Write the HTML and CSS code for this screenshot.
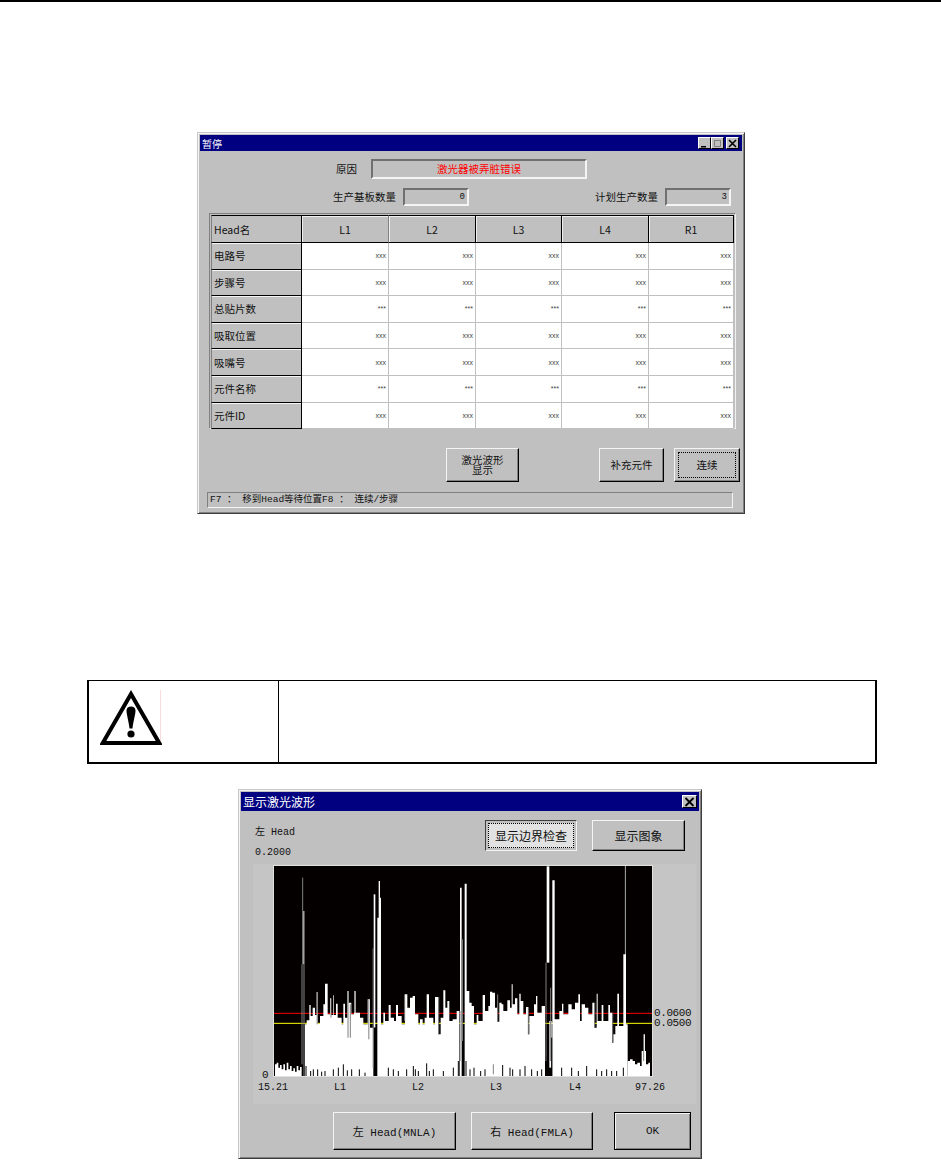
FILE: index.html
```html
<!DOCTYPE html>
<html lang="zh">
<head>
<meta charset="utf-8">
<title>暂停</title>
<link rel="stylesheet" href="styles.css">
</head>
<body>
<div class="rule"></div>

<section class="dlg pause">
  <header class="titlebar small">
    <span>暂停</span>
    <div class="tbtns">
      <span class="tb"><svg viewBox="0 0 11 9" width="11" height="9"><path d="M2 7h5v1.5H2z" fill="#000"/></svg></span>
      <span class="tb"><svg viewBox="0 0 11 9" width="11" height="9"><path d="M2.5 1.5h6v6h-6z" fill="none" stroke="#808080"/><path d="M2 1h7v1H2z" fill="#808080"/></svg></span>
      <span class="tb tb-close"><svg viewBox="0 0 11 9" width="11" height="9"><path d="M2 1l7 7M9 1L2 8" stroke="#000" stroke-width="1.6" fill="none"/></svg></span>
    </div>
  </header>

  <div class="reason-row">
    <span class="lbl">原因</span>
    <div class="field reason">激光器被弄脏错误</div>
  </div>

  <div class="count-row">
    <span class="lbl">生产基板数量</span>
    <div class="field num white-ish">0</div>
    <span class="lbl plan">计划生产数量</span>
    <div class="field num">3</div>
  </div>

  <div class="grid-frame">
    <div class="grid">
      <div class="rowhead first">Head名</div>
      <div class="colhead soft">L1</div>
      <div class="colhead">L2</div>
      <div class="colhead">L3</div>
      <div class="colhead">L4</div>
      <div class="colhead">R1</div>

      <div class="rowhead">电路号</div><div class="cell">xxx</div><div class="cell">xxx</div><div class="cell">xxx</div><div class="cell">xxx</div><div class="cell">xxx</div>
      <div class="rowhead">步骤号</div><div class="cell">xxx</div><div class="cell">xxx</div><div class="cell">xxx</div><div class="cell">xxx</div><div class="cell">xxx</div>
      <div class="rowhead">总贴片数</div><div class="cell">***</div><div class="cell">***</div><div class="cell">***</div><div class="cell">***</div><div class="cell">***</div>
      <div class="rowhead">吸取位置</div><div class="cell">xxx</div><div class="cell">xxx</div><div class="cell">xxx</div><div class="cell">xxx</div><div class="cell">xxx</div>
      <div class="rowhead">吸嘴号</div><div class="cell">xxx</div><div class="cell">xxx</div><div class="cell">xxx</div><div class="cell">xxx</div><div class="cell">xxx</div>
      <div class="rowhead">元件名称</div><div class="cell">***</div><div class="cell">***</div><div class="cell">***</div><div class="cell">***</div><div class="cell">***</div>
      <div class="rowhead">元件ID</div><div class="cell">xxx</div><div class="cell">xxx</div><div class="cell">xxx</div><div class="cell">xxx</div><div class="cell">xxx</div>
    </div>
  </div>

  <div class="pause-actions">
    <button class="btn wave-btn">激光波形<br>显示</button>
    <button class="btn add-btn">补充元件</button>
    <button class="btn cont-btn"><span class="focus">连续</span></button>
  </div>

  <div class="status">F7 ： 移到Head等待位置F8 ： 连续/步骤</div>
</section>

<section class="warn">
  <div class="warn-icon">
    <svg viewBox="0 0 62 56" width="62" height="56">
      <path d="M60.5 0v55" stroke="#fbdcdc" fill="none"/>
      <path d="M31 4L2.8 53h56.4z" fill="#fff" stroke="#000" stroke-width="4" stroke-linejoin="miter"/>
      <path d="M26.5 20.5c0-2.500 2-4 4.500-4s4.500 1.500 4.500 4c0 4-2.500 12-3 18h-3c-.5-6-3-14-3-18z" fill="#000"/>
      <circle cx="31" cy="44" r="3.600" fill="#000"/>
    </svg>
  </div>
  <div class="warn-body"></div>
</section>

<section class="dlg wave">
  <header class="titlebar large">
    <span>显示激光波形</span>
    <span class="tb tb-big"><svg viewBox="0 0 13 10" width="13" height="10"><path d="M2.500 1l8 8M10.500 1l-8 8" stroke="#000" stroke-width="1.800" fill="none"/></svg></span>
  </header>

  <div class="wave-top">
    <div class="wave-info">
      <div>左 Head</div>
      <div>0.2000</div>
    </div>
    <button class="btn check-btn"><span class="focus dither">显示边界检查</span></button>
    <button class="btn image-btn">显示图象</button>
  </div>

  <div class="chart">
    <div class="y-zero">0</div>
    <svg class="plot" viewBox="12 15 1134 630" width="378" height="210">
      <rect x="12" y="15" width="1134" height="630" fill="#040000"/>
      <path d="M12 457H1146" stroke="#ff0000" stroke-width="3" fill="none"/>
      <path d="M12 487H1146" stroke="#ffff00" stroke-width="3" fill="none"/>
      <g fill="#fff">
        <path d="M15 645V610H20V605H25V620H30V612H35V625H40V610H45V628H50V605H55V625H60V615H65V630H70V622H75V632H80V615H85V628H90V618H95V645Z"/>
        <path d="M100 310V150H103V310Z"/>
        <path d="M105 645V490H110V478H118V432H122V465H128V440H135V462H140V393H143V488H150V465H160V430H165V368H173V460H180V412H183V462H190V403H192V462H198V428H203V470H215V490H220V428H225V470H232V390H236V425H244V460H252V390H257V455H270V470H280V490H293V415H300V500H310V645Z"/>
        <path d="M311 500V100H316V500Z"/>
        <path d="M322 500V170H326V60H330V110H333V645H322Z"/>
        <path d="M333 645V490H340V455H345V480H356V432H362V470H372V480H378V432H384V465H395V490H405V400H412V440H420V410H428V405H435V460H445V490H450V475H458V490H464V470H470V400H477V470H490V490H495V408H505V520H512V470H520V388H526V440H532V420H538V480H548V475H560V450H568V645Z"/>
        <path d="M570 645V80H575V645Z"/>
      </g>
      <g fill="#fff" transform="translate(570 0)">
        <path d="M14 645V68H20V390H28V425H35V435H42V490H50V462H55V480H68V402H75V450H85V435H90V392H97V395H105V440H112V482H118V425H125V430H130V450H142V418H150V440H155V370H158V430H165V412H172V460H178V398H182V420H190V460H198V438H204V520H208V465H222V430H228V405H232V455H245V435H255V645Z"/>
        <path d="M260 305V16H268V305Z"/>
        <path d="M268 620V480H275V620Z"/>
        <path d="M277 645V58H284V475H298V450H306V428H310V460H325V430H335V445H345V425H355V400H360V480H365V430H375V440H385V460H397V425H403V500H410V398H413V480H425V432H430V480H445V432H450V455H456V545H460V520H466V495H472V398H477V495H490V280H495V16H498V490H503V645Z"/>
        <path d="M503 645V600H510V595H518V600H525V610H532V605H540V615H545V570H552V520H555V570H558V610H565V605H570V645Z"/>
      </g>
      <path fill="none" stroke="#808080" stroke-width="3" d="M98 50V310M141.500 393V490M183 412V470M234 390V530M241 430V530M254 390V455M296.500 415V535M309.500 262V620M102 310V645M96 310V610M404 400V480M506 408V520M577 235V540M570 450V600"/>
      <path fill="none" stroke="#808080" stroke-width="3" transform="translate(570 0)" d="M6 235V540M113 400V482M205 438V520M258 305V600M272 380V600M496 16V280M551 520V600M100 610V640M404 425V500M458 455V545"/>
      <path fill="none" stroke="#000" stroke-width="3" d="M108 645V615M122 645V630M130 645V625M143 645V625M155 645V632M165 645V630M190 645V625M205 645V620M220 645V610M232 645V628M245 645V625M268 645V625M285 645V635M355 645V620M370 645V625M385 645V630M410 645V625M430 645V615M436 645V625M445 645V630M470 645V607M478 645V630M490 645V625M520 645V630M550 645V620M565 645V600M580 645V540"/>
      <path fill="none" stroke="#000" stroke-width="8" d="M316 645V500"/>
      <path fill="none" stroke="#000" stroke-width="3" transform="translate(570 0)" d="M8 645V600M18 645V600M30 645V625M42 645V620M62 645V630M75 645V625M128 645V612M150 645V620M158 645V625M180 645V625M195 645V615M215 645V625M232 645V630M245 645V625M262 645V585M275 645V530M305 645V620M335 645V620M355 645V630M380 645V615M410 645V625M425 645V630M440 645V625M455 645V630M470 645V630M490 645V620"/>
    </svg>
    <div class="y-marks">
      <div>0.0600</div>
      <div>0.0500</div>
    </div>
    <div class="x-axis">
      <span>15.21</span><span>L1</span><span>L2</span><span>L3</span><span>L4</span><span>97.26</span>
    </div>
  </div>

  <div class="wave-actions">
    <button class="btn left-btn">左 Head(MNLA)</button>
    <button class="btn right-btn">右 Head(FMLA)</button>
    <button class="btn ok-btn">OK</button>
  </div>
</section>
</body>
</html>
```
FILE: styles.css
```css
html, body {
  margin: 0;
  padding: 0;
  background: #fff;
  overflow: hidden;
}

body {
  width: 941px;
  height: 1160px;
  font-family: "Liberation Mono", "Noto Sans CJK SC", monospace;
  color: #111;
}

.rule {
  height: 2px;
  background: #000;
}

/* Dialog shell */
.dlg {
  box-sizing: border-box;
  background: #c0c0c0;
  border: 1px solid;
  border-color: #c8c8c8 #3c3c3c #3c3c3c #c8c8c8;
  box-shadow: inset 1px 1px 0 #f4f4f4, inset -1px -1px 0 #808080;
  padding: 2px;
}

.titlebar {
  display: flex;
  align-items: center;
  justify-content: space-between;
  background: #000080;
  color: #fff;
  font-family: "Noto Sans CJK SC", sans-serif;
}

.titlebar.small {
  height: 16px;
  font-size: 10px;
  padding: 0 3px 0 2px;
}

.titlebar.large {
  height: 19px;
  font-size: 12px;
  padding: 0 2px 0 2px;
}

.tbtns {
  display: flex;
}

.tb {
  box-sizing: border-box;
  display: flex;
  align-items: center;
  justify-content: center;
  width: 13px;
  height: 12px;
  background: #c0c0c0;
  border: 1px solid;
  border-color: #fff #000 #000 #fff;
}

.tb svg {
  flex: none;
}

.tb-close {
  margin-left: 2px;
}

.tb-big {
  width: 15px;
  height: 13px;
}

/* Pause dialog */
.pause {
  width: 548px;
  height: 382px;
  margin: 130px 0 0 197px;
}

.lbl {
  font-family: "Noto Sans CJK SC", sans-serif;
  font-size: 10.5px;
  line-height: 14px;
}

.field {
  box-sizing: border-box;
  background: #c0c0c0;
  border: 2px solid;
  border-color: #707070 #f4f4f4 #f4f4f4 #707070;
  font-family: "Noto Sans CJK SC", sans-serif;
}

.reason-row {
  display: flex;
  align-items: center;
  margin-top: 8px;
  padding-left: 136px;
}

.reason {
  width: 216px;
  height: 20px;
  margin-left: 14px;
  color: #ff0000;
  font-size: 10.5px;
  line-height: 16px;
  text-align: center;
}

.count-row {
  display: flex;
  align-items: center;
  margin-top: 9px;
  padding-left: 133px;
}

.num {
  width: 66px;
  height: 18px;
  margin-left: 7px;
  padding-right: 2px;
  font-family: "Liberation Mono", monospace;
  font-size: 9px;
  line-height: 14px;
  text-align: right;
}

.plan {
  margin-left: 126px;
}

.grid-frame {
  box-sizing: border-box;
  width: 527px;
  height: 216px;
  margin: 7px 0 0 9px;
  padding: 1px;
  border: 1px solid;
  border-color: #808080 #f0f0f0 #f0f0f0 #808080;
}

.grid {
  display: grid;
  grid-template-columns: 91px 87px 87px 86px 87px 85px;
  grid-template-rows: 28px repeat(7, 26.6px);
}

.rowhead,
.colhead {
  box-sizing: border-box;
  display: flex;
  align-items: center;
  background: #c0c0c0;
  font-family: "Noto Sans CJK SC", sans-serif;
  font-size: 10.5px;
  border-bottom: 1px solid #000;
}

.rowhead {
  padding-left: 2px;
  border-left: 1px solid #808080;
  border-right: 1px solid #000;
  box-shadow: inset 0 1px 0 #f4f4f4;
}

.rowhead.first {
  border-top: 1px solid #000;
  box-shadow: none;
}

.colhead {
  justify-content: center;
  border-top: 1px solid #000;
  border-right: 1px solid #000;
  box-shadow: inset 1px 1px 0 #f0f0f0;
}

.colhead.soft {
  border-right-color: #808080;
}

.cell {
  box-sizing: border-box;
  display: flex;
  align-items: center;
  justify-content: flex-end;
  padding-right: 2px;
  background: #fff;
  border-right: 1px solid #c0c0c0;
  border-bottom: 1px solid #c0c0c0;
  color: #444;
  font-family: "Liberation Sans", sans-serif;
  font-size: 7px;
}

/* Raised buttons */
.btn {
  box-sizing: border-box;
  margin: 0;
  padding: 0;
  background: #c0c0c0;
  border: 1px solid;
  border-color: #f4f4f4 #000 #000 #f4f4f4;
  box-shadow: inset -1px -1px 0 #808080;
  color: #111;
  font-family: "Liberation Mono", "Noto Sans CJK SC", monospace;
  font-size: 11px;
}

.focus {
  box-sizing: border-box;
  display: flex;
  align-items: center;
  justify-content: center;
  height: 100%;
  border: 1px dotted #000;
}

.pause-actions {
  display: flex;
  height: 34px;
  margin-top: 19px;
  padding-left: 246px;
}

.pause-actions .btn {
  font-family: "Noto Sans CJK SC", sans-serif;
  font-size: 10.5px;
  line-height: 10px;
}

.wave-btn {
  width: 73px;
}

.add-btn {
  width: 65px;
  margin-left: 80px;
}

.cont-btn {
  width: 66px;
  margin-left: 10px;
  padding: 3px;
}

.status {
  box-sizing: border-box;
  width: 526px;
  height: 16px;
  margin: 10px 0 0 7px;
  padding-left: 2px;
  border: 1px solid;
  border-color: #808080 #f4f4f4 #f4f4f4 #808080;
  font-size: 9.5px;
  line-height: 14px;
  white-space: nowrap;
}

/* Warning box */
.warn {
  box-sizing: border-box;
  display: grid;
  grid-template-columns: 190px 1fr;
  width: 790px;
  height: 84px;
  margin: 166px 0 0 87px;
  border: 2px solid #000;
  border-top-width: 1px;
}

.warn-icon {
  box-sizing: border-box;
  padding: 9px 0 0 11px;
  border-right: 1px solid #000;
}

/* Waveform dialog */
.wave {
  width: 464px;
  height: 370px;
  margin: 25px 0 0 238px;
}

.wave-top {
  display: flex;
  align-items: flex-start;
  height: 53px;
  padding: 9px 14px 0 14px;
  box-sizing: border-box;
}

.wave-info {
  flex: 1;
  padding-top: 3px;
  font-size: 10px;
  line-height: 20px;
}

.check-btn,
.image-btn {
  height: 31px;
  font-family: "Noto Sans CJK SC", sans-serif;
  font-size: 12px;
}

.check-btn {
  width: 92px;
  padding: 2px;
  border-color: #404040 #f4f4f4 #f4f4f4 #404040;
  box-shadow: none;
}

.dither {
  background: #e2e2e2;
}

.image-btn {
  width: 93px;
  margin-left: 15px;
}

.chart {
  display: grid;
  grid-template-columns: 21px 378px 1fr;
  grid-template-rows: 210px auto;
  height: 240px;
  box-sizing: border-box;
  margin: 0 3px 0 12px;
  padding-top: 2px;
  background: #c5c5c5;
}

.plot {
  display: block;
  outline: 1px solid #e0e0e0;
}

.y-zero {
  align-self: end;
  margin-bottom: -4px;
  padding-left: 9px;
  font-size: 11px;
  line-height: 10px;
}

.y-marks {
  padding: 142px 0 0 2px;
  font-size: 11px;
  letter-spacing: -0.4px;
  line-height: 10px;
}

.x-axis {
  grid-column: 1 / -1;
  display: grid;
  grid-template-columns: 76px 78px 78px 79px 66px auto;
  margin-top: 6px;
  padding-left: 5px;
  font-size: 10px;
  line-height: 12px;
}

.wave-actions {
  display: flex;
  height: 38px;
  margin-top: 8px;
  padding-left: 92px;
}

.left-btn {
  width: 123px;
}

.right-btn {
  width: 122px;
  margin-left: 15px;
}

.ok-btn {
  width: 77px;
  margin-left: 21px;
  border-color: #000;
  box-shadow: inset 1px 1px 0 #f4f4f4, inset -1px -1px 0 #808080;
}
```
